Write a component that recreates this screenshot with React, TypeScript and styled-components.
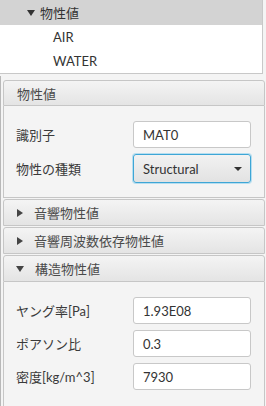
import React from 'react';
import styled, { createGlobalStyle } from 'styled-components';

const GlobalStyle = createGlobalStyle`
  html, body {
    margin: 0;
    padding: 0;
    background: #f4f4f4;
    font-family: Lato, 'Noto Sans CJK JP', sans-serif;
    font-size: 13px;
    color: #333;
  }
`;

const Page = styled.div`
  width: 266px;
  height: 406px;
  overflow: hidden;
  display: flex;
  flex-direction: column;
  background: #f4f4f4;
`;

const Tree = styled.div`
  width: 262px;
  height: 73px;
  background: #fff;
  border-right: 1px solid #c8c8c8;
  border-bottom: 1px solid #c8c8c8;
  flex-shrink: 0;
`;

const TreeRow = styled.div<{ $selected?: boolean; $indent: number }>`
  height: 24px;
  display: flex;
  align-items: center;
  padding-left: ${(p) => p.$indent}px;
  background: ${(p) => (p.$selected ? '#d3d3d3' : '#fff')};
  color: #333;
  &:first-child {
    height: 25px;
  }
`;

const Caret = styled.span`
  width: 0;
  height: 0;
  border-left: 4px solid transparent;
  border-right: 4px solid transparent;
  border-top: 6px solid #333;
  margin-right: 5px;
`;

const Scroll = styled.div`
  flex: 1;
  margin-top: 2px;
  border-left: 1px solid #b8b8b8;
  border-right: 1px solid #c4c4c4;
  width: 262px;
  padding: 4px 1px 0 2px;
  display: flex;
  flex-direction: column;
  gap: 1px;
`;

const Header = styled.div<{ $h?: number }>`
  height: ${(p) => p.$h ?? 27}px;
  display: flex;
  align-items: center;
  padding-left: 13px;
  border: 1px solid #c6c6c6;
  border-radius: 3px 3px 0 0;
  background: linear-gradient(#f4f4f4, #e4e4e4);
  color: #4a4a4a;
  box-sizing: border-box;
  flex-shrink: 0;
`;

const Arrow = styled.span<{ $open: boolean }>`
  width: 0;
  height: 0;
  margin-right: 11px;
  ${(p) =>
    p.$open
      ? `border-left: 4px solid transparent;
         border-right: 4px solid transparent;
         border-top: 6px solid #444;
         margin-left: -1px;`
      : `border-top: 4px solid transparent;
         border-bottom: 4px solid transparent;
         border-left: 6px solid #444;`}
`;

const Body = styled.div<{ $height: number; $top: number }>`
  height: ${(p) => p.$height}px;
  border: 1px solid #c6c6c6;
  border-top: none;
  background: #f4f4f4;
  box-sizing: border-box;
  padding: ${(p) => p.$top}px 10px 0 12px;
  display: flex;
  flex-direction: column;
  gap: 6px;
`;

const Row = styled.div`
  display: flex;
  align-items: center;
`;

const Label = styled.span`
  width: 117px;
  color: #3a3a3a;
`;

const Field = styled.div`
  width: 118px;
  height: 27px;
  box-sizing: border-box;
  background: #fff;
  border: 1px solid #c8c8c8;
  border-radius: 3px;
  display: flex;
  align-items: center;
  padding-left: 9px;
  color: #333;
`;

const Combo = styled.div`
  width: 118px;
  height: 29px;
  box-sizing: border-box;
  background: linear-gradient(#f2f2f2, #e2e2e2);
  border: 1px solid #3ea6d6;
  box-shadow: 0 0 0 1px #b6def0;
  border-radius: 3px;
  display: flex;
  align-items: center;
  justify-content: space-between;
  padding: 0 8px 0 9px;
  color: #333;
`;

const ComboArrow = styled.span`
  width: 0;
  height: 0;
  border-left: 4px solid transparent;
  border-right: 4px solid transparent;
  border-top: 4px solid #333;
`;

function Pane({ title, open }: { title: string; open: boolean }) {
  return (
    <Header>
      <Arrow $open={open} />
      {title}
    </Header>
  );
}

export default function App() {
  return (
    <Page>
      <GlobalStyle />
      <Tree>
        <TreeRow $selected $indent={27}>
          <Caret />物性値
        </TreeRow>
        <TreeRow $indent={53}>AIR</TreeRow>
        <TreeRow $indent={53}>WATER</TreeRow>
      </Tree>
      <Scroll>
        <div>
          <Header $h={26}>物性値</Header>
          <Body $height={92} $top={15}>
            <Row>
              <Label>識別子</Label>
              <Field>MAT0</Field>
            </Row>
            <Row>
              <Label>物性の種類</Label>
              <Combo>
                Structural
                <ComboArrow />
              </Combo>
            </Row>
          </Body>
        </div>
        <Pane title="音響物性値" open={false} />
        <Pane title="音響周波数依存物性値" open={false} />
        <div>
          <Pane title="構造物性値" open />
          <Body $height={130} $top={15}>
            <Row>
              <Label>ヤング率[Pa]</Label>
              <Field>1.93E08</Field>
            </Row>
            <Row>
              <Label>ポアソン比</Label>
              <Field>0.3</Field>
            </Row>
            <Row>
              <Label>密度[kg/m^3]</Label>
              <Field>7930</Field>
            </Row>
          </Body>
        </div>
      </Scroll>
    </Page>
  );
}
